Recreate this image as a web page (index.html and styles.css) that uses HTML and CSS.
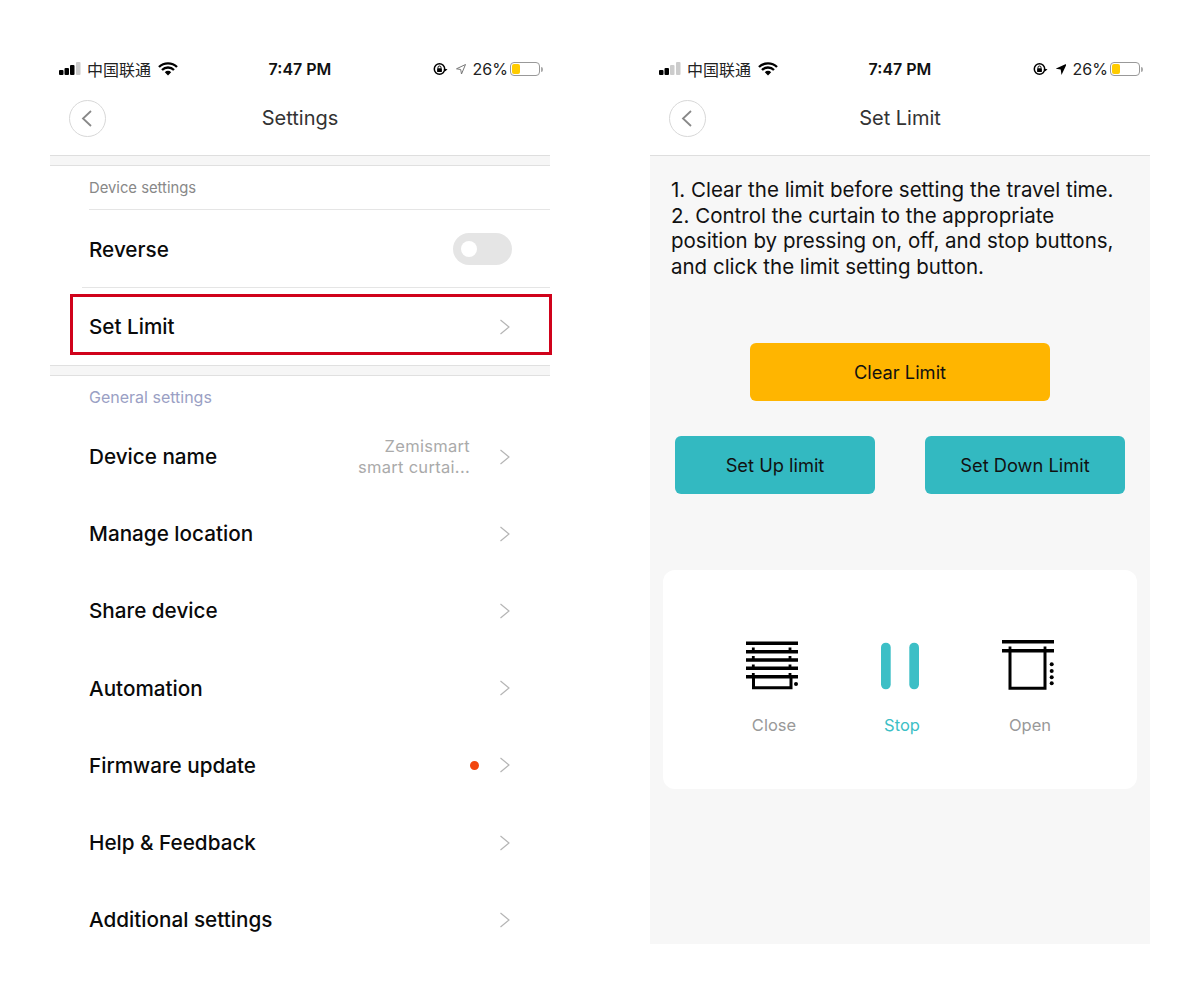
FILE: index.html
```html
<!DOCTYPE html>
<html lang="en">
<head>
<meta charset="utf-8">
<title>Curtain settings</title>
<link rel="stylesheet" href="styles.css">
</head>
<body>
<div class="page">
  <section class="phone">
    <header class="status">
      <div class="status-left">
        <svg class="signal" width="24" height="14" viewBox="0 0 24 14"><rect x="1" y="8" width="4.500" height="5" rx="1" fill="#000"/><rect x="6.500" y="6" width="4.500" height="7" rx="1" fill="#000"/><rect x="12" y="3" width="4.500" height="10" rx="1" fill="#000"/><rect x="18" y="0" width="4.500" height="13" rx="1" fill="#ccc"/></svg>
        <span class="carrier">中国联通</span>
        <svg class="wifi" width="20" height="14" viewBox="0 0 20 14"><path d="M1 5a13 13 0 0 1 18 0M4 8a8.600 8.600 0 0 1 12 0" fill="none" stroke="#000" stroke-width="2.400"/><path d="M6.800 10.200a4.500 4.500 0 0 1 6.400 0L10 13.500z" fill="#000"/></svg>
      </div>
      <div class="time">7:47 PM</div>
      <div class="status-right">
        <svg class="rot" width="15" height="14" viewBox="0 0 15 14"><circle cx="6.500" cy="7" r="5.200" fill="none" stroke="#000" stroke-width="1.500"/><rect x="4.100" y="6.300" width="4.800" height="3.700" rx=".6" fill="#000"/><path d="M5 6.500v-1a1.500 1.500 0 0 1 3 0v1" fill="none" stroke="#000"/><path d="M10.500 7h4l-2 2.300z" fill="#000"/></svg>
        <svg class="loc" width="10" height="12" viewBox="0 0 10 12"><path d="M9.500 1.500 .5 5.800l4.200.7.800 4.500z" fill="none" stroke="#777" stroke-width="1"/></svg>
        <span class="pct">26%</span>
        <span class="battery"><span class="level"></span></span><span class="nub"></span>
      </div>
    </header>
    <nav class="nav">
      <span class="back"><svg width="13" height="19" viewBox="0 0 13 19"><path d="M11 2 3 9.500 11 17" fill="none" stroke="#888" stroke-width="1.800"/></svg></span>
      <h1 class="title">Settings</h1>
    </nav>
    <div class="band"></div>
    <div class="group-head">Device settings</div>
    <div class="row row-reverse"><span class="label">Reverse</span><span class="toggle"><span class="knob"></span></span></div>
    <div class="row row-limit">
      <span class="label">Set Limit</span>
      <svg class="chev" width="12" height="16" viewBox="0 0 12 16"><path d="M1.500 1 10 8l-8.500 7" fill="none" stroke="#b5b5b5" stroke-width="1.200"/></svg>
      <span class="highlight"></span>
    </div>
    <div class="band band-lined"></div>
    <div class="group-head group-general">General settings</div>
    <div class="row"><span class="label">Device name</span><span class="value">Zemismart<br>smart curtai...</span><svg class="chev" width="12" height="16" viewBox="0 0 12 16"><path d="M1.500 1 10 8l-8.500 7" fill="none" stroke="#b5b5b5" stroke-width="1.200"/></svg></div>
    <div class="row"><span class="label">Manage location</span><svg class="chev" width="12" height="16" viewBox="0 0 12 16"><path d="M1.500 1 10 8l-8.500 7" fill="none" stroke="#b5b5b5" stroke-width="1.200"/></svg></div>
    <div class="row"><span class="label">Share device</span><svg class="chev" width="12" height="16" viewBox="0 0 12 16"><path d="M1.500 1 10 8l-8.500 7" fill="none" stroke="#b5b5b5" stroke-width="1.200"/></svg></div>
    <div class="row"><span class="label">Automation</span><svg class="chev" width="12" height="16" viewBox="0 0 12 16"><path d="M1.500 1 10 8l-8.500 7" fill="none" stroke="#b5b5b5" stroke-width="1.200"/></svg></div>
    <div class="row"><span class="label">Firmware update</span><span class="dot"></span><svg class="chev" width="12" height="16" viewBox="0 0 12 16"><path d="M1.500 1 10 8l-8.500 7" fill="none" stroke="#b5b5b5" stroke-width="1.200"/></svg></div>
    <div class="row"><span class="label">Help &amp; Feedback</span><svg class="chev" width="12" height="16" viewBox="0 0 12 16"><path d="M1.500 1 10 8l-8.500 7" fill="none" stroke="#b5b5b5" stroke-width="1.200"/></svg></div>
    <div class="row"><span class="label">Additional settings</span><svg class="chev" width="12" height="16" viewBox="0 0 12 16"><path d="M1.500 1 10 8l-8.500 7" fill="none" stroke="#b5b5b5" stroke-width="1.200"/></svg></div>
  </section>

  <section class="phone phone-limit">
    <header class="status status-light">
      <div class="status-left">
        <svg class="signal" width="24" height="14" viewBox="0 0 24 14"><rect x="1" y="8" width="4.500" height="5" rx="1" fill="#000"/><rect x="6.500" y="6" width="4.500" height="7" rx="1" fill="#000"/><rect x="12" y="3" width="4.500" height="10" rx="1" fill="#ccc"/><rect x="18" y="0" width="4.500" height="13" rx="1" fill="#ccc"/></svg>
        <span class="carrier">中国联通</span>
        <svg class="wifi" width="20" height="14" viewBox="0 0 20 14"><path d="M1 5a13 13 0 0 1 18 0M4 8a8.600 8.600 0 0 1 12 0" fill="none" stroke="#000" stroke-width="2.400"/><path d="M6.800 10.200a4.500 4.500 0 0 1 6.400 0L10 13.500z" fill="#000"/></svg>
      </div>
      <div class="time">7:47 PM</div>
      <div class="status-right">
        <svg class="rot" width="15" height="14" viewBox="0 0 15 14"><circle cx="6.500" cy="7" r="5.200" fill="none" stroke="#000" stroke-width="1.500"/><rect x="4.100" y="6.300" width="4.800" height="3.700" rx=".6" fill="#000"/><path d="M5 6.500v-1a1.500 1.500 0 0 1 3 0v1" fill="none" stroke="#000"/><path d="M10.500 7h4l-2 2.300z" fill="#000"/></svg>
        <svg class="loc" width="10" height="12" viewBox="0 0 10 12"><path d="M11 .5-.5 5.800l5.200.7.800 5.500z" fill="#000"/></svg>
        <span class="pct">26%</span>
        <span class="battery"><span class="level"></span></span><span class="nub"></span>
      </div>
    </header>
    <nav class="nav">
      <span class="back"><svg width="13" height="19" viewBox="0 0 13 19"><path d="M11 2 3 9.500 11 17" fill="none" stroke="#888" stroke-width="1.800"/></svg></span>
      <h1 class="title">Set Limit</h1>
    </nav>
    <div class="limit-body">
      <p class="help">1. Clear the limit before setting the travel time.<br>2. Control the curtain to the appropriate<br>position by pressing on, off, and stop buttons,<br>and click the limit setting button.</p>
      <div class="btn-clear-wrap"><button class="btn btn-clear">Clear Limit</button></div>
      <div class="btn-pair"><button class="btn btn-set">Set Up limit</button><button class="btn btn-set">Set Down Limit</button></div>
      <div class="card">
        <div class="ctl">
          <svg class="ctl-icon" width="56" height="52" viewBox="0 0 56 52" fill="none" stroke="#000">
            <path d="M2 4.300h52M2 12.700h52M2 21h52M2 29.300h52M2 37.700h52" stroke-width="3.400"/>
            <path d="M9.300 8.500v4M46 8.500v4M9.300 17v4M46 17v4M9.300 25.500v4M46 25.500v4M9.300 34v4M46 34v4" stroke-width="2.800"/>
            <path d="M9.500 37.700v11h37.500V37.700" stroke-width="3"/>
            <circle cx="52" cy="45" r="2" fill="#000" stroke="none"/>
          </svg>
          <span class="ctl-label">Close</span>
        </div>
        <div class="ctl ctl-active">
          <svg class="ctl-icon" width="56" height="52" viewBox="0 0 56 52"><rect x="9" y="3.700" width="9.700" height="46.600" rx="4.800" fill="#3cbfc6"/><rect x="37.300" y="3.700" width="9.700" height="46.600" rx="4.800" fill="#3cbfc6"/></svg>
          <span class="ctl-label">Stop</span>
        </div>
        <div class="ctl">
          <svg class="ctl-icon" width="56" height="52" viewBox="0 0 56 52" fill="none" stroke="#000">
            <path d="M2 2.700h52M2 11.700h52" stroke-width="3.400"/>
            <path d="M10 7.500v4M45 7.500v4" stroke-width="2.800"/>
            <path d="M10 11.700v37.500h35V11.700" stroke-width="3"/>
            <circle cx="51.700" cy="25.300" r="2" fill="#000" stroke="none"/>
            <circle cx="51.700" cy="32" r="2" fill="#000" stroke="none"/>
            <circle cx="51.700" cy="38.300" r="2" fill="#000" stroke="none"/>
            <circle cx="51.700" cy="44.300" r="2" fill="#000" stroke="none"/>
          </svg>
          <span class="ctl-label">Open</span>
        </div>
      </div>
    </div>
  </section>
</div>
</body>
</html>
```
FILE: styles.css
```css
* { box-sizing: border-box; }
html, body { margin: 0; padding: 0; background: #fff; }
body { font-family: Inter, "Noto Sans CJK SC", sans-serif; color: #000; }
.page { display: flex; gap: 100px; padding: 44px 50px 54px; }
.phone { width: 500px; height: 900px; display: flex; flex-direction: column; background: #fff; }

.status { height: 50px; flex: none; display: grid; grid-template-columns: 1fr auto 1fr; align-items: center; padding: 0 8px; }
.status-left { display: flex; align-items: center; }
.signal { margin-right: 5px; }
.carrier { font-size: 16px; color: #222; }
.wifi { margin-left: 7px; }
.time { font-size: 16px; font-weight: 600; color: #111; }
.status-right { display: flex; align-items: center; justify-content: flex-end; }
.rot { margin-right: 8px; }
.loc { margin-right: 7px; }
.pct { font-size: 16px; color: #222; margin-right: 2px; }
.battery { width: 30px; height: 14px; border: 1px solid #999; border-radius: 4px; padding: 1px; display: flex; }
.level { width: 8px; background: #fc0; border-radius: 2px; }
.nub { width: 2px; height: 5px; background: #aaa; margin-left: 1px; margin-right: -1px; border-radius: 0 2px 2px 0; }

.nav { height: 62px; flex: none; border-bottom: 1px solid #dedede; display: flex; align-items: center; justify-content: center; position: relative; padding-bottom: 14px; }
.back { position: absolute; left: 19px; top: 6px; width: 37px; height: 37px; border: 1px solid #d8d8d8; border-radius: 50%; display: flex; align-items: center; justify-content: center; padding-right: 2px; }
.title { margin: 0; font-size: 20px; font-weight: 400; color: #333; }

.band { height: 10px; flex: none; background: #f6f6f6; border-bottom: 1px solid #e0e0e0; }
.band-lined { height: 11px; border-top: 1px solid #e0e0e0; }
.group-head { height: 44px; flex: none; margin-left: 39px; border-bottom: 1px solid #e5e5e5; display: flex; align-items: center; font-size: 14.800px; color: #888; }
.group-general { height: 42px; margin-left: 39px; border-bottom: 0; color: #9aa0c4; font-size: 16px; }

.row { height: 77.2px; flex: none; display: flex; align-items: center; padding: 0 39px; position: relative; }
.label { font-size: 20.700px; font-weight: 500; color: #0a0a0a; margin-right: auto; }
.row-reverse { height: 78px; margin-left: 32px; padding-left: 7px; padding-right: 38px; border-bottom: 1px solid #e5e5e5; }
.row-reverse .label { padding-top: 2px; }
.row-limit { height: 77px; }
.toggle { width: 59px; height: 32px; border-radius: 16px; background: #e5e5e5; display: flex; align-items: center; padding-left: 8px; }
.knob { width: 16px; height: 16px; border-radius: 50%; background: #fff; }
.chev { flex: none; }
.value { font-size: 16.500px; line-height: 21px; color: #aaa; text-align: right; margin-right: 29px; letter-spacing: .3px; }
.dot { width: 9px; height: 9px; border-radius: 50%; background: #f2470f; margin-right: 20px; }
.highlight { position: absolute; left: 20px; top: 6px; width: 482px; height: 61px; border: 3px solid #d0021b; pointer-events: none; }

.limit-body { flex: 1; background: #f7f7f7; padding: 21px 13px 0; }
.help { margin: 0 0 0 8px; font-size: 20.500px; line-height: 25.700px; color: #111; }
.btn { border: 0; padding: 0; height: 58px; border-radius: 6px; font: 400 18.300px Inter, sans-serif; color: #111; }
.btn-clear-wrap { display: flex; justify-content: center; margin-top: 63px; }
.btn-clear { width: 300px; background: #ffb500; }
.btn-pair { display: flex; justify-content: space-between; margin: 35px 12px 0; }
.btn-set { width: 200px; background: #33b9c1; }
.card { margin-top: 76px; width: 474px; height: 219px; border-radius: 12px; background: #fff; display: flex; justify-content: center; padding-top: 69px; }
.ctl { width: 128px; display: flex; flex-direction: column; align-items: center; }
.ctl-label { margin-top: 24px; padding-left: 4px; font-size: 16.500px; color: #999; }
.ctl-active .ctl-label { color: #3cbfc6; }
```
